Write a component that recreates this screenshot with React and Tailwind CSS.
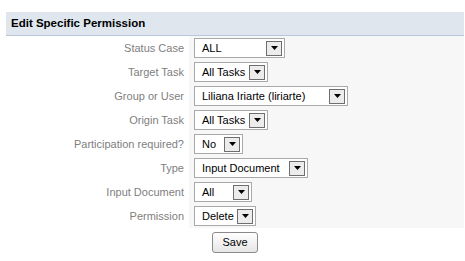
const rows = [
  { label: "Status Case", value: "ALL", w: "w-[91px]" },
  { label: "Target Task", value: "All Tasks", w: "w-[74px]" },
  { label: "Group or User", value: "Liliana Iriarte (liriarte)", w: "w-[154px]" },
  { label: "Origin Task", value: "All Tasks", w: "w-[74px]" },
  { label: "Participation required?", value: "No", w: "w-[49px]" },
  { label: "Type", value: "Input Document", w: "w-[114px]" },
  { label: "Input Document", value: "All", w: "w-[58px]" },
  { label: "Permission", value: "Delete", w: "w-[62px]" },
];

function Select({ value, w }) {
  return (
    <div className={`${w} h-[20px] bg-white border border-[#a9a9a9] flex items-center justify-between pl-[7px] pr-[2px]`}>
      <span className="text-[11px] text-black whitespace-nowrap leading-none">{value}</span>
      <span className="w-[16px] h-[15px] ml-[2px] border border-[#6e6e6e] bg-[#ececec] flex items-center justify-center shrink-0">
        <svg width="7" height="4" viewBox="0 0 7 4">
          <path d="M0 0h7L3.5 4z" fill="#000" />
        </svg>
      </span>
    </div>
  );
}

export default function App() {
  return (
    <div className="w-[465px] h-[261px] bg-white pt-[12px] pl-[6px] pr-[1px] font-['Liberation_Sans',Arial,sans-serif]">
      <div className="h-[24px] bg-[#dfe6ee] border-b border-[#b8c8d8] flex items-center pl-[5px]">
        <span className="text-[11.5px] font-bold text-black">Edit Specific Permission</span>
      </div>
      <div className="flex">
        <div className="w-[183px] flex flex-col">
          {rows.map((r) => (
            <div key={r.label} className="h-[24px] flex items-center justify-end pr-[5px] text-[11px] text-[#808080] whitespace-nowrap">
              {r.label}
            </div>
          ))}
        </div>
        <div className="flex-1 bg-[#f7f7f7] pl-[5px] flex flex-col">
          {rows.map((r) => (
            <div key={r.label} className="h-[24px] flex items-center">
              <Select value={r.value} w={r.w} />
            </div>
          ))}
        </div>
      </div>
      <div className="flex pl-[206px] pt-[4px]">
        <button className="w-[46px] h-[21px] rounded-[3px] border border-[#8a8a8a] bg-gradient-to-b from-white to-[#e6e6e6] text-[11px] text-black">
          Save
        </button>
      </div>
    </div>
  );
}
